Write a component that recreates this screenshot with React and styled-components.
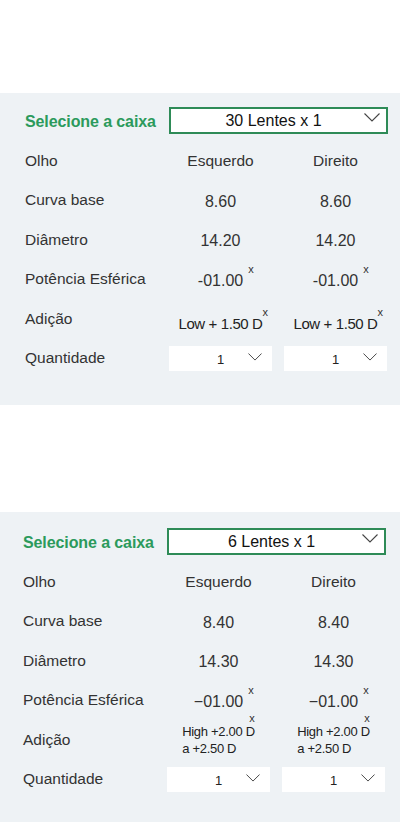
import React from "react";
import styled, { createGlobalStyle } from "styled-components";

const GlobalStyle = createGlobalStyle`
  body {
    margin: 0;
    background: #ffffff;
    font-family: "Liberation Sans", Arial, sans-serif;
    color: #333333;
  }
`;

const boxes = [
  {
    caixa: "30 Lentes x 1",
    shift: 25,
    top: 14,
    curva: "8.60",
    diametro: "14.20",
    potencia: "-01.00",
    adicao: ["Low + 1.50 D"],
  },
  {
    caixa: "6 Lentes x 1",
    shift: 23,
    top: 16,
    curva: "8.40",
    diametro: "14.30",
    potencia: "\u221201.00",
    adicao: ["High +2.00 D", "a +2.50 D"],
  },
];

function Chevron({ w = 16, h = 9 }) {
  return (
    <svg width={w} height={h} viewBox="0 0 16 9" fill="none">
      <path d="M0.5 0.5 L8 8 L15.5 0.5" stroke="#444" strokeWidth="1.1" />
    </svg>
  );
}

function Quantity() {
  return (
    <QtySelect>
      <QtyValue>1</QtyValue>
      <QtyArrow>
        <Chevron w={14} h={8} />
      </QtyArrow>
    </QtySelect>
  );
}

// value with the little "x" marker hanging at its top right
function Marked({ children, $kind = "gap" }) {
  return (
    <MarkWrap>
      {children}
      <Mark $kind={$kind}>x</Mark>
    </MarkWrap>
  );
}

function BoxPanel({ box }) {
  const multi = box.adicao.length > 1;
  return (
    <Panel $shift={box.shift} $top={box.top}>
      <Header>
        <Title>Selecione a caixa</Title>
        <BoxSelect>
          <span>{box.caixa}</span>
          <BoxArrow>
            <Chevron />
          </BoxArrow>
        </BoxSelect>
      </Header>
      <Table>
        <Label>Olho</Label>
        <Cell>Esquerdo</Cell>
        <Cell>Direito</Cell>

        <Label>Curva base</Label>
        <Value>{box.curva}</Value>
        <Value>{box.curva}</Value>

        <Label>Diâmetro</Label>
        <Value>{box.diametro}</Value>
        <Value>{box.diametro}</Value>

        <Label>Potência Esférica</Label>
        <Value>
          <Marked>{box.potencia}</Marked>
        </Value>
        <Value>
          <Marked>{box.potencia}</Marked>
        </Value>

        <Label>Adição</Label>
        {[0, 1].map((i) => (
          <AddCell key={i} $multi={multi}>
            <Marked $kind={multi ? "above" : "tight"}>
              <AddText $multi={multi}>
                {box.adicao.map((line) => (
                  <div key={line}>{line}</div>
                ))}
              </AddText>
            </Marked>
          </AddCell>
        ))}

        <Label>Quantidade</Label>
        <Quantity />
        <Quantity />
      </Table>
    </Panel>
  );
}

export default function App() {
  return (
    <>
      <GlobalStyle />
      <Page>
        {boxes.map((box) => (
          <BoxPanel key={box.caixa} box={box} />
        ))}
      </Page>
    </>
  );
}

const Page = styled.div`
  padding-top: 93px;
  display: flex;
  flex-direction: column;
  gap: 107px;
`;

const Panel = styled.section`
  background: #eef2f5;
  padding: ${(p) => p.$top}px 0 27px ${(p) => p.$shift}px;
`;

const Header = styled.div`
  display: grid;
  grid-template-columns: 144px 219px;
  height: 27px;
  align-items: center;
`;

const Title = styled.div`
  color: #2b9a5c;
  font-weight: bold;
  font-size: 16px;
  letter-spacing: -0.1px;
  padding-top: 3px;
  white-space: nowrap;
`;

const BoxSelect = styled.div`
  position: relative;
  box-sizing: border-box;
  height: 27px;
  border: 2px solid #2e8b57;
  background: #fff;
  display: flex;
  align-items: center;
  justify-content: center;
  font-size: 16px;
  color: #111;
  padding-right: 10px;
`;

const BoxArrow = styled.span`
  position: absolute;
  right: 6px;
  top: 4px;
  display: flex;
`;

const Table = styled.div`
  margin-top: 7px;
  display: grid;
  grid-template-columns: 132px 103px 103px;
  column-gap: 12px;
  grid-auto-rows: 39.5px;
  align-items: center;
`;

const Label = styled.div`
  font-size: 15.5px;
  color: #333;
  white-space: nowrap;
`;

const Cell = styled.div`
  font-size: 15.5px;
  color: #333;
  text-align: center;
  padding-top: 1px;
`;

const Value = styled.div`
  font-size: 16px;
  color: #333;
  text-align: center;
  padding-top: 3px;
`;

const MarkWrap = styled.span`
  position: relative;
  display: inline-block;
`;

const markPlace = {
  gap: "left: calc(100% + 5px); top: -8px;",
  tight: "left: 100%; top: -8px;",
  above: "right: 0; top: -10px;",
};

const Mark = styled.span`
  position: absolute;
  ${(p) => markPlace[p.$kind]}
  font-size: 11px;
  line-height: 1;
  color: #333;
`;

const AddCell = styled.div`
  display: flex;
  justify-content: center;
  padding-top: ${(p) => (p.$multi ? "0" : "11px")};
`;

const AddText = styled.div`
  text-align: left;
  font-size: ${(p) => (p.$multi ? "13px" : "15px")};
  line-height: ${(p) => (p.$multi ? "17px" : "18px")};
  letter-spacing: ${(p) => (p.$multi ? "-0.3px" : "-0.4px")};
  color: #222;
`;

const QtySelect = styled.div`
  position: relative;
  height: 25px;
  background: #fff;
  display: flex;
  align-items: center;
  justify-content: center;
  margin-top: 1px;
`;

const QtyValue = styled.span`
  font-size: 13px;
  color: #222;
  padding-top: 2px;
`;

const QtyArrow = styled.span`
  position: absolute;
  right: 10px;
  top: 7px;
  display: flex;
`;
